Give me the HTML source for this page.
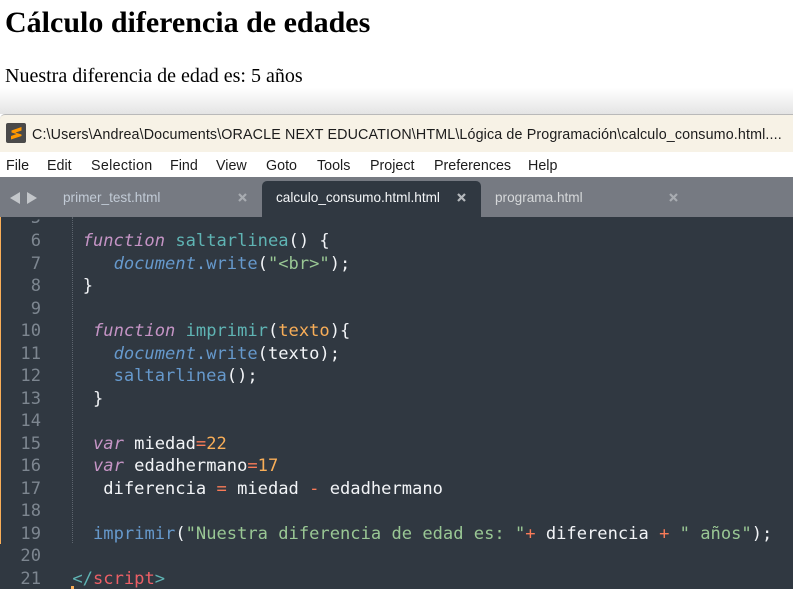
<!DOCTYPE html>
<html><head><meta charset="utf-8"><style>
html,body{margin:0;padding:0;background:#fff}
#r{position:relative;width:793px;height:589px;overflow:hidden;background:#fff}
#r div{position:absolute;white-space:pre}
.ui{font:14.3px/20px "Liberation Sans",sans-serif;color:#1c1c1c}
.t{font:13.6px/20px "Liberation Sans",sans-serif}
.c{font:17.1px/22.5px "DejaVu Sans Mono","Liberation Mono",monospace;color:#d8dee9;left:72.4px}
.n{font:17.1px/22.5px "DejaVu Sans Mono","Liberation Mono",monospace;color:#7d8690;width:41px;text-align:right;left:0}
i{font-style:italic}
.k{color:#c594c5}.b{color:#6699cc}.g{color:#5fb4b4}.o{color:#f9ae58}.s{color:#99c794}.r{color:#f97b58}.w{color:#f2f4f7}.e{color:#ec5f66}
</style></head><body><div id="r">
<div style="left:5px;top:6px;font:bold 30px/34px 'Liberation Serif',serif;color:#000">Cálculo diferencia de edades</div>
<div style="left:5px;top:65px;font:20px/22px 'Liberation Serif',serif;color:#000">Nuestra diferencia de edad es: 5 años</div>
<div style="left:0;top:88px;width:793px;height:26px;background:linear-gradient(#fff,#e4e4e4)"></div>
<div style="left:0;top:114px;width:793px;height:38px;background:#f7f2e6;border-top:1px solid #b9b9b9;box-sizing:border-box;border-radius:5px 0 0 0"></div>
<svg style="position:absolute;left:6px;top:123px" width="20" height="20" viewBox="0 0 20 20"><rect width="20" height="20" rx="2" fill="#4a4a4a"/><path d="M5.5 7.5L15.5 4V7.5L9.5 9.6L15.5 11.5V13L5 16.5V13L10.5 11L5.5 9.5Z" fill="#ff9800"/></svg>
<div class="ui" style="left:32px;top:125px;letter-spacing:.13px">C:\Users\Andrea\Documents\ORACLE NEXT EDUCATION\HTML\Lógica de Programación\calculo_consumo.html....</div>
<div style="left:0;top:152px;width:793px;height:25px;background:#fff"></div>
<div class="ui" style="left:6px;top:156px">File</div>
<div class="ui" style="left:47px;top:156px">Edit</div>
<div class="ui" style="left:91px;top:156px;letter-spacing:.3px">Selection</div>
<div class="ui" style="left:170px;top:156px">Find</div>
<div class="ui" style="left:216px;top:156px">View</div>
<div class="ui" style="left:266px;top:156px">Goto</div>
<div class="ui" style="left:317px;top:156px">Tools</div>
<div class="ui" style="left:370px;top:156px">Project</div>
<div class="ui" style="left:434px;top:156px">Preferences</div>
<div class="ui" style="left:528px;top:156px">Help</div>
<div style="left:0;top:177px;width:793px;height:40px;background:#767a82"></div>
<svg style="position:absolute;left:8px;top:191px" width="30" height="14"><path d="M2 7L12 1V13Z M19 1L29 7L19 13Z" fill="#c3c6ca"/></svg>
<div class="t" style="left:63px;top:188px;color:#c2cbd6">primer_test.html</div>
<svg style="position:absolute;left:238px;top:193px" width="9" height="9"><path d="M1 1L8 8M8 1L1 8" stroke="#a8acb1" stroke-width="2.2"/></svg>
<div style="left:262px;top:181px;width:219px;height:36px;background:#303841;border-radius:5px 5px 0 0"></div>
<div class="t" style="left:276px;top:188px;color:#f5f7f9">calculo_consumo.html.html</div>
<svg style="position:absolute;left:457px;top:193px" width="9" height="9"><path d="M1 1L8 8M8 1L1 8" stroke="#b4b8bc" stroke-width="2.2"/></svg>
<div class="t" style="left:495px;top:188px;color:#d6d8da">programa.html</div>
<svg style="position:absolute;left:669px;top:193px" width="9" height="9"><path d="M1 1L8 8M8 1L1 8" stroke="#a8acb1" stroke-width="2.2"/></svg>
<div style="left:0;top:217px;width:793px;height:372px;background:#303841"></div>
<div style="left:0;top:217px;width:1px;height:327px;background:#f9ae58"></div>
<div style="left:72px;top:217px;width:0;height:326px;border-left:1px dotted #5c646d"></div>
<div style="left:71px;top:586px;width:3px;height:3px;background:#f9ae58"></div>
<div class="n" style="top:207px;clip-path:inset(12.5px 0 0 0)">5</div>
<div class="n" style="top:230px">6</div>
<div class="n" style="top:252.5px">7</div>
<div class="n" style="top:275px">8</div>
<div class="n" style="top:297.5px">9</div>
<div class="n" style="top:320px">10</div>
<div class="n" style="top:342.5px">11</div>
<div class="n" style="top:365px">12</div>
<div class="n" style="top:387.5px">13</div>
<div class="n" style="top:410px">14</div>
<div class="n" style="top:432.5px">15</div>
<div class="n" style="top:455px">16</div>
<div class="n" style="top:477.5px">17</div>
<div class="n" style="top:500px">18</div>
<div class="n" style="top:522.5px">19</div>
<div class="n" style="top:545px">20</div>
<div class="n" style="top:567.5px">21</div>
<div class="c" style="top:230px"> <i class="k">function</i> <span class="g">saltarlinea</span><span class="w">() {</span></div>
<div class="c" style="top:252.5px">    <i class="b">document</i><span class="b">.write</span><span class="w">(</span><span class="s">"&lt;br&gt;"</span><span class="w">);</span></div>
<div class="c" style="top:275px"> <span class="w">}</span></div>
<div class="c" style="top:320px">  <i class="k">function</i> <span class="g">imprimir</span><span class="w">(</span><span class="o">texto</span><span class="w">){</span></div>
<div class="c" style="top:342.5px">    <i class="b">document</i><span class="b">.write</span><span class="w">(texto);</span></div>
<div class="c" style="top:365px">    <span class="b">saltarlinea</span><span class="w">();</span></div>
<div class="c" style="top:387.5px">  <span class="w">}</span></div>
<div class="c" style="top:432.5px">  <i class="k">var</i> <span class="w">miedad</span><span class="r">=</span><span class="o">22</span></div>
<div class="c" style="top:455px">  <i class="k">var</i> <span class="w">edadhermano</span><span class="r">=</span><span class="o">17</span></div>
<div class="c" style="top:477.5px">   <span class="w">diferencia</span> <span class="r">=</span> <span class="w">miedad</span> <span class="r">-</span> <span class="w">edadhermano</span></div>
<div class="c" style="top:522.5px">  <span class="b">imprimir</span><span class="w">(</span><span class="s">"Nuestra diferencia de edad es: "</span><span class="r">+</span> <span class="w">diferencia</span> <span class="r">+</span> <span class="s">" años"</span><span class="w">);</span></div>
<div class="c" style="top:567.5px"><span class="g">&lt;/</span><span class="e">script</span><span class="g">&gt;</span></div>
</div></body></html>
